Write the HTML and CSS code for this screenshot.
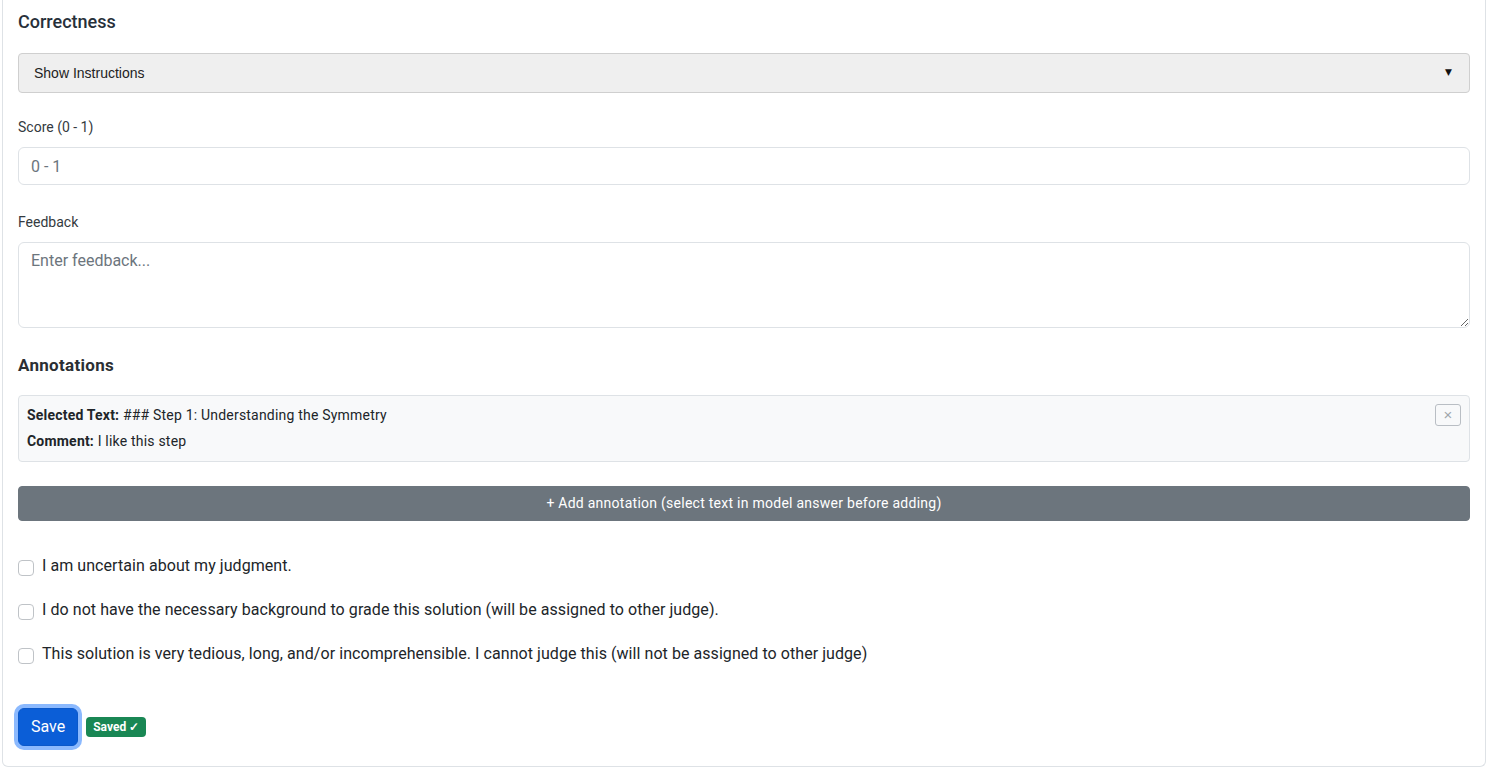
FILE: index.html
```html
<!DOCTYPE html>
<html lang="en">
<head>
  <meta charset="UTF-8" />
  <meta name="viewport" content="width=device-width, initial-scale=1.0" />
  <title>Grading | Correctness</title>
  <link rel="stylesheet" href="styles.css">
</head>
<body>

  <div class="card">
    <h5 class="criterion-title">Correctness</h5>

    <details class="instructions">
      <summary>
        <span>Show Instructions</span>
        <span class="arrow">&#9660;</span>
      </summary>
    </details>

    <div class="field">
      <label class="form-label" for="score">Score (0 - 1)</label>
      <input class="form-control" id="score" type="text" placeholder="0 - 1" />
    </div>

    <div class="field">
      <label class="form-label" for="feedback">Feedback</label>
      <textarea class="form-control feedback" id="feedback" placeholder="Enter feedback..."></textarea>
    </div>

    <h6 class="section-title">Annotations</h6>

    <div class="annotation">
      <div class="annotation-text">
        <p><strong>Selected Text:</strong> ### Step 1: Understanding the Symmetry</p>
        <p><strong>Comment:</strong> I like this step</p>
      </div>
      <button class="btn-remove" type="button">&times;</button>
    </div>

    <button class="btn-add" type="button">+ Add annotation (select text in model answer before adding)</button>

    <div class="checks">
      <label class="form-check">
        <input type="checkbox" />
        <span>I am uncertain about my judgment.</span>
      </label>
      <label class="form-check">
        <input type="checkbox" />
        <span>I do not have the necessary background to grade this solution (will be assigned to other judge).</span>
      </label>
      <label class="form-check">
        <input type="checkbox" />
        <span>This solution is very tedious, long, and/or incomprehensible. I cannot judge this (will not be assigned to other judge)</span>
      </label>
    </div>

    <div class="actions">
      <button class="btn-save" type="button">Save</button>
      <span class="badge">Saved &#10003;</span>
    </div>
  </div>

</body>
</html>
```

FILE: styles.css
```css
/* General Body and Layout */
body {
  font-family: Roboto, "Noto Sans", sans-serif;
  font-size: 16px;
  line-height: 1.5;
  color: #212529;
  margin: 0;
  padding: 0;
  background-color: #fff;
}

.card {
  margin: 0 2px;
  padding: 10px 15px 20px;
  border: 1px solid #dee2e6;
  border-top: none;
  border-radius: 0 0 6px 6px;
}

.criterion-title {
  font-size: 18px;
  font-weight: 500;
  line-height: 24px;
  color: #27303a;
  margin: 0 0 19px;
}

/* Instructions toggle */
.instructions {
  margin-bottom: 24px;
}

.instructions summary {
  list-style: none;
  display: flex;
  justify-content: space-between;
  align-items: center;
  height: 38px;
  padding: 0 17px 0 15px;
  background-color: #efefef;
  border: 1px solid #cfcfcf;
  border-radius: 4px;
  font-family: "Liberation Sans", Arial, sans-serif;
  font-size: 14px;
  color: #222;
  cursor: pointer;
}

.instructions summary::-webkit-details-marker {
  display: none;
}

.arrow {
  font-family: "DejaVu Sans", sans-serif;
  font-size: 9px;
  color: #111;
}

/* Form fields */
.field {
  margin-bottom: 27px;
}

.form-label {
  display: block;
  font-size: 14px;
  line-height: 21px;
  color: #343a40;
  margin-bottom: 9px;
}

.form-control {
  display: block;
  box-sizing: border-box;
  width: 100%;
  height: 38px;
  padding: 6px 12px;
  font-family: inherit;
  font-size: 16px;
  line-height: 24px;
  color: #212529;
  border: 1px solid #dee2e6;
  border-radius: 6px;
}

.form-control::placeholder {
  color: #6c757d;
}

.feedback {
  height: 86px;
}

.section-title {
  font-size: 17px;
  font-weight: 700;
  line-height: 19px;
  letter-spacing: 0.3px;
  color: #2b2f33;
  margin: 28px 0 20px;
}

/* Annotation card */
.annotation {
  display: flex;
  justify-content: space-between;
  align-items: flex-start;
  padding: 9px 8px 4px;
  background-color: #f8f9fa;
  border: 1px solid #dee2e6;
  border-radius: 4px;
  font-size: 14px;
  line-height: 21px;
  letter-spacing: 0.2px;
}

.annotation p {
  margin: 0 0 5px;
}

.btn-remove {
  width: 26px;
  height: 22px;
  margin-top: -1px;
  padding: 0;
  background: #fff0;
  border: 1px solid #b9bec4;
  border-radius: 3px;
  color: #a0a6ac;
  font-size: 15px;
  line-height: 18px;
  cursor: pointer;
}

.btn-add {
  display: block;
  width: 100%;
  margin-top: 24px;
  padding: 6px 12px;
  background-color: #6c757d;
  border: 1px solid #6c757d;
  border-radius: 4px;
  color: #fff;
  font-family: inherit;
  font-size: 14px;
  line-height: 21px;
  letter-spacing: 0.26px;
  cursor: pointer;
}

/* Checkboxes */
.checks {
  display: flex;
  flex-direction: column;
  gap: 20px;
  margin-top: 33px;
}

.form-check {
  display: flex;
  align-items: flex-start;
  gap: 8px;
  line-height: 24px;
  letter-spacing: 0.06px;
}

.form-check input {
  appearance: none;
  flex-shrink: 0;
  width: 16px;
  height: 16px;
  margin: 6px 0 0;
  background-color: #fff;
  border: 1px solid #bfc3c7;
  border-radius: 4px;
}

/* Save row */
.actions {
  display: flex;
  align-items: center;
  gap: 8px;
  margin-top: 42px;
}

.btn-save {
  padding: 6px 12px;
  background-color: #0b5ed7;
  border: 1px solid #0a58ca;
  border-radius: 6px;
  box-shadow: 0 0 0 4px #8bb9fe;
  color: #fff;
  font-family: inherit;
  font-size: 16px;
  line-height: 24px;
  cursor: pointer;
}

.badge {
  padding: 0 7px;
  height: 20px;
  line-height: 20px;
  background-color: #198754;
  border-radius: 4px;
  color: #fff;
  font-size: 12px;
  font-weight: 700;
}
```
